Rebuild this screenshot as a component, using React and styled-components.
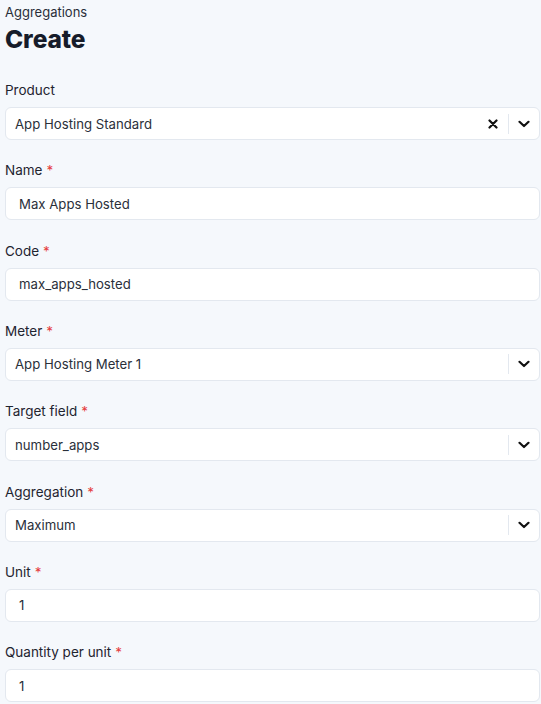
import React from "react";
import styled, { createGlobalStyle } from "styled-components";

const Global = createGlobalStyle`
  html, body { margin: 0; padding: 0; background: #f5f8fc; }
  body { font-family: "Inter", "Noto Sans", sans-serif; color: #1f2430; }
  * { box-sizing: border-box; }
`;

const Page = styled.div`
  padding: 3px 1px 20px 5px;
  background: #f5f8fc;
  min-height: 704px;
`;

const Crumb = styled.div`
  font-size: 13px;
  line-height: 18px;
  color: #2a2f3a;
`;

const Title = styled.h1`
  margin: 2px 0 0;
  font-size: 24.5px;
  line-height: 32px;
  font-weight: 800;
  color: #161c2a;
  letter-spacing: -0.1px;
`;

const Form = styled.div`
  margin-top: 25px;
  display: flex;
  flex-direction: column;
  gap: 20.33px;
`;

const Field = styled.div`
  display: flex;
  flex-direction: column;
  gap: 7px;
`;

const Label = styled.label`
  font-size: 13.5px;
  line-height: 20px;
  color: #1f2430;
`;

const Req = styled.span`
  color: #e53e3e;
  margin-left: 4px;
`;

const Box = styled.div`
  height: 33px;
  background: #fff;
  border: 1px solid #e3e8ef;
  border-radius: 6px;
  display: flex;
  align-items: center;
  font-size: 13.2px;
  color: #2a2f3a;
`;

const Value = styled.div`
  flex: 1;
  padding-left: ${(p) => (p.$select ? "9px" : "13px")};
  white-space: nowrap;
`;

const Indicator = styled.div`
  width: ${(p) => p.$w}px;
  height: 100%;
  display: flex;
  align-items: center;
  justify-content: center;
  color: #111;
`;

const Sep = styled.span`
  width: 1px;
  height: 20px;
  background: #e3e8ef;
`;

const XIcon = () => (
  <svg width="10" height="10" viewBox="0 0 10 10">
    <path d="M1.5 1.5 L8.5 8.5 M8.5 1.5 L1.5 8.5" stroke="#111" strokeWidth="2.2" strokeLinecap="round" />
  </svg>
);

const Chevron = () => (
  <svg width="12" height="8" viewBox="0 0 12 8">
    <path d="M1.5 1.8 L6 6 L10.5 1.8" stroke="#111" strokeWidth="2.2" fill="none" strokeLinecap="round" strokeLinejoin="round" />
  </svg>
);

const fields = [
  { label: "Product", value: "App Hosting Standard", type: "select", clear: true },
  { label: "Name", value: "Max Apps Hosted", req: true },
  { label: "Code", value: "max_apps_hosted", req: true },
  { label: "Meter", value: "App Hosting Meter 1", type: "select", req: true },
  { label: "Target field", value: "number_apps", type: "select", req: true },
  { label: "Aggregation", value: "Maximum", type: "select", req: true },
  { label: "Unit", value: "1", req: true },
  { label: "Quantity per unit", value: "1", req: true },
];

export default function App() {
  return (
    <>
      <Global />
      <Page>
        <Crumb>Aggregations</Crumb>
        <Title>Create</Title>
        <Form>
          {fields.map((f) => (
            <Field key={f.label}>
              <Label>
                {f.label}
                {f.req && <Req>*</Req>}
              </Label>
              <Box>
                <Value $select={f.type === "select"}>{f.value}</Value>
                {f.type === "select" && (
                  <>
                    {f.clear && (
                      <Indicator $w={30}>
                        <XIcon />
                      </Indicator>
                    )}
                    <Sep />
                    <Indicator $w={30}>
                      <Chevron />
                    </Indicator>
                  </>
                )}
              </Box>
            </Field>
          ))}
        </Form>
      </Page>
    </>
  );
}
